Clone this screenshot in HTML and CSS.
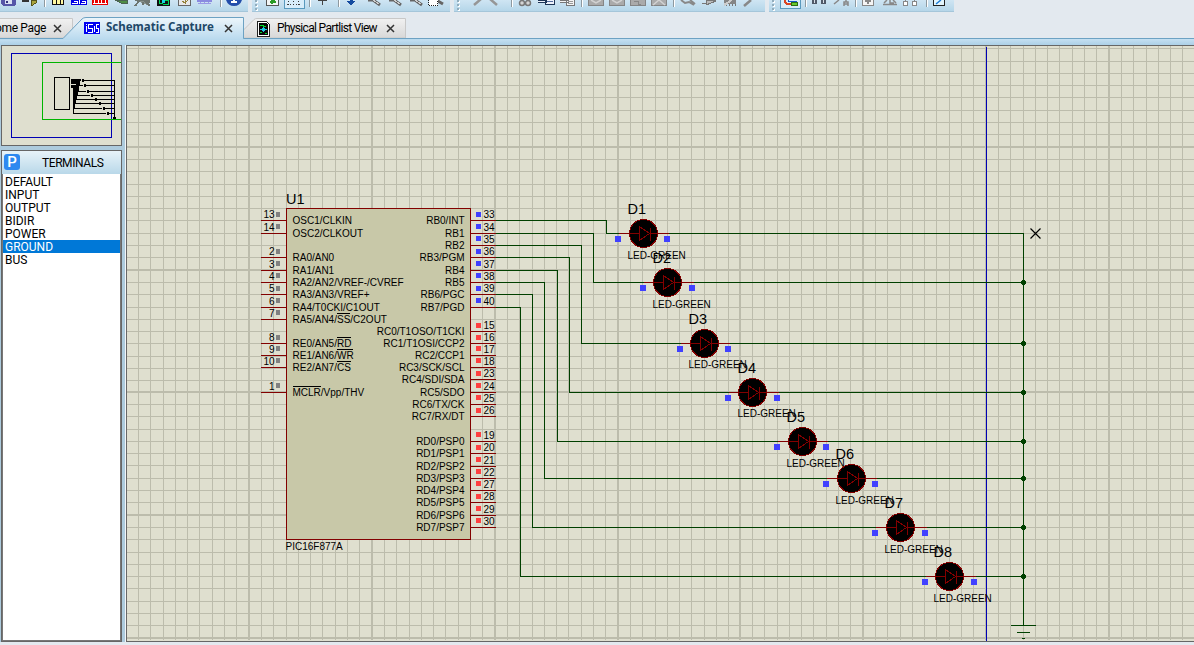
FILE: index.html
```html
<!DOCTYPE html>
<html lang="en">
<head>
<meta charset="utf-8">
<title>Schematic Capture</title>
<link rel="stylesheet" href="styles.css">
</head>
<body>
<div class="app">
  <header class="toolbar">
    <div class="group group-file">
      <svg width="247" height="12" shape-rendering="crispEdges">
        <path d="M1 0H16V4L14 6H3L1 4Z" fill="#5656a8"/><path d="M5 0H12V4H5Z" fill="#d9dff2"/><path d="M6 1H8V3H6Z" fill="#34347c"/>
        <path d="M22 0H29V2H22Z" fill="#333"/><path d="M31 0H36V3L31 6Z" fill="#aaa43c" stroke="#55551c"/>
        <path d="M44 0V7" stroke="#8e999f"/><path d="M45 0V7" stroke="#fff"/>
        <path d="M52 0H64V5H52Z" fill="#111"/><path d="M53 0H56V4H53ZM57 0H60V4H57ZM61 0H63V4H61Z" fill="#fff8a0"/>
        <path d="M71 0H87V5H71Z" fill="#0000e6"/><path d="M72 3.500H77.500V1.500H74M79.500 0V4M81 3.500H85.500V1.500H82" stroke="#fff" fill="none"/>
        <path d="M92 0H108V5H92Z" fill="#e80000"/><path d="M93 3.500H107M94.500 0V3M98.500 0V3M101.500 0V3M105.500 0V3" stroke="#fff" fill="none"/>
        <path d="M115 0L121 3H127V0Z" fill="#4e8e45" stroke="#4b6352"/>
        <path d="M135 0H149V2H146L150 6M139 1L135 6M143 2V5" fill="#87928c" stroke="#6c7570" stroke-width="2"/>
        <path d="M157 0H170V6H157Z" fill="#111"/><path d="M159 0V3H163M165 0H168V4H163" fill="none" stroke="#00d85c"/><path d="M162 0H165V3H162Z" fill="#16d6df"/>
        <path d="M178.500-1H190.500V5.500H178.500Z" fill="#e8e8e8" stroke="#666"/><path d="M182 1L185 3L188 0M185 0V4" stroke="#958138" fill="none"/>
        <path d="M197 0H212V2H197Z" fill="#8a8ae0"/><path d="M198 3.500H211M200 2V3M204 2V3M208 2V3" stroke="#9999e5"/>
        <path d="M220 0V7" stroke="#8e999f"/><path d="M221 0V7" stroke="#fff"/>
        <path d="M226 0H242Q240 6 234 6Q228 6 226 0" fill="#234daa" shape-rendering="auto"/><path d="M231 1H237V3H231ZM233 0H235V1H233Z" fill="#fff"/>
      </svg>
    </div>
    <div class="group group-view">
      <svg width="198" height="12" shape-rendering="crispEdges">
        <path d="M4 1H6V3H4ZM4 5H6V7H4ZM4 9H6V11H4Z" fill="#fff"/><path d="M3 0H5V2H3ZM3 4H5V6H3ZM3 8H5V10H3Z" fill="#92adbd"/>
        <path d="M14.500-1H26.500V5.500H14.500Z" fill="#f2f5f5" stroke="#555"/><path d="M20 4V0L24 2H18" fill="none" stroke="#2a9b25" stroke-width="2"/>
        <path d="M32.500-1H52.500V8.500H32.500Z" fill="#d8edfa" stroke="#5999bd"/><path d="M35 4.500H50" stroke="#444" stroke-dasharray="1 2"/><path d="M36 1V6M41 1V6M46 1V6" stroke="#333" stroke-dasharray="1 2"/>
        <path d="M57 0V7" stroke="#8e999f"/><path d="M58 0V7" stroke="#fff"/><path d="M70.500 0V5M66 .500H75" stroke="#444"/>
        <path d="M86 0V7" stroke="#8e999f"/><path d="M87 0V7" stroke="#fff"/>
        <path d="M95 1L99 5L103 1H100V0H98V1Z" fill="#144b9f" stroke="#144b9f"/>
        <g fill="none" stroke="#666" stroke-width="3" shape-rendering="auto"><path d="M116 0H121L128 5M137 0H142L149 5M158 0H163L170 5M184 0L191 4"/></g>
        <g fill="none" stroke="#ccc"><path d="M121 0L127 4M142 0L148 4M163 0L169 4"/></g>
        <path d="M176.500-2H185.500V5.500H176.500Z" fill="#fff" stroke="#222" stroke-dasharray="1 1"/>
      </svg>
    </div>
    <div class="group group-edit">
      <svg width="311" height="12" shape-rendering="crispEdges">
        <path d="M4 1H6V3H4ZM4 5H6V7H4ZM4 9H6V11H4Z" fill="#fff"/><path d="M3 0H5V2H3ZM3 4H5V6H3ZM3 8H5V10H3Z" fill="#92adbd"/>
        <path d="M20 5L27-1M43 5L36-1" stroke="#969696" stroke-width="2.500" shape-rendering="auto"/>
        <path d="M57 0V7" stroke="#8e999f"/><path d="M58 0V7" stroke="#fff"/>
        <g fill="#d4d4d4" stroke="#777" stroke-width="1.500" shape-rendering="auto"><circle cx="68" cy="3" r="2.500"/><circle cx="74" cy="3" r="2.500"/></g>
        <path d="M84 0H92V2H84M91.500-1H100.500V4H91.500Z" fill="#ecf1fa" stroke="#1d3556"/><path d="M93 1.500H99" stroke="#536c9d"/>
        <path d="M106 0H114V2H106M112.500-1H120.500V5.500H112.500Z" fill="#f3f3f3" stroke="#777"/><path d="M114 1.500H119M114 3.500H119" stroke="#999"/>
        <path d="M127 0V7" stroke="#8e999f"/><path d="M128 0V7" stroke="#fff"/>
        <path d="M134.500-1H149.500V5.500H134.500ZM155.500-1H170.500V5.500H155.500ZM176.500-1H191.500V5.500H176.500ZM197.500-1H212.500V5.500H197.500Z" fill="#aaa" stroke="#858585"/>
        <path d="M137 0L142 3L147 0M158 0L163 3L168 0M199 5L205 0L211 5" fill="none" stroke="#d2d2d2" stroke-width="1.500" shape-rendering="auto"/><path d="M180 1H184V4H187" fill="none" stroke="#888"/>
        <path d="M219 0V7" stroke="#8e999f"/><path d="M220 0V7" stroke="#fff"/>
        <path d="M227 0L231 3L235 2L240 5M236 0L241 4" fill="none" stroke="#888" stroke-width="2" shape-rendering="auto"/>
        <path d="M248 3H252V0L262 1L252 5V3" fill="#bbb" stroke="#777"/>
        <path d="M270 0H282V4H270Z" fill="#858585"/><path d="M272 4V6M275 4V6M278 4V6M281 4V6" stroke="#777"/><path d="M270 5L278 0" stroke="#ccc" stroke-width="2"/>
        <path d="M290 6L297 0" stroke="#888" stroke-width="2.500" shape-rendering="auto"/>
      </svg>
    </div>
    <div class="group group-design">
      <svg width="185" height="12" shape-rendering="crispEdges">
        <path d="M4 1H6V3H4ZM4 5H6V7H4ZM4 9H6V11H4Z" fill="#fff"/><path d="M3 0H5V2H3ZM3 4H5V6H3ZM3 8H5V10H3Z" fill="#92adbd"/>
        <path d="M11.500-1H31.500V8.500H11.500Z" fill="#d8edfa" stroke="#5999bd"/><path d="M16 0V2L18 4H22" fill="none" stroke="#d94524" stroke-width="2"/><path d="M19.500 0V1.500H28" fill="none" stroke="#1556c6"/><path d="M22.500 2.500H28.500V5.500H22.500Z" fill="#68c92f" stroke="#2d6e13"/>
        <path d="M36 0V7" stroke="#8e999f"/><path d="M37 0V7" stroke="#fff"/>
        <path d="M43 0H48V4H43ZM52 0H57V4H52Z" fill="#4f5968"/><path d="M45 0H46V3H45ZM54 0H55V3H54Z" fill="#d9dfe7"/>
        <path d="M65 4L70 0M75 6V2H79V6M75 4H79M77 0V2" fill="none" stroke="#888" stroke-width="1.500" shape-rendering="auto"/>
        <path d="M86 0V7" stroke="#8e999f"/><path d="M87 0V7" stroke="#fff"/>
        <path d="M93.500-1H104.500V5.500H93.500Z" fill="#f5f5f5" stroke="#888"/><path d="M96 1H102M99 0V4" stroke="#888" stroke-width="2"/>
        <path d="M114 4.500H128M115 3L118 0M121 0V3H125M124 0L127 3" fill="none" stroke="#888" stroke-width="1.500" shape-rendering="auto"/>
        <path d="M134.500 1.500H138.500V5.500H134.500ZM143.500 1.500H147.500V5.500H143.500ZM136 0V1M145 0V1" fill="#fff" stroke="#888"/>
        <path d="M157 0V7" stroke="#8e999f"/><path d="M158 0V7" stroke="#fff"/>
        <path d="M164.500-1H175.500V5.500H164.500Z" fill="#e3f5fc" stroke="#222"/><path d="M167 4L172 0" stroke="#1c7cd6" stroke-width="1.500" shape-rendering="auto"/>
      </svg>
    </div>
  </header>

  <nav class="tabs">
    <svg class="tab-shapes" width="420" height="23">
      <defs><linearGradient id="tabGray" x2="0" y2="1"><stop stop-color="#f1f1f1"/><stop offset="1" stop-color="#d8d8d8"/></linearGradient>
      <linearGradient id="tabBlue" x2="0" y2="1"><stop stop-color="#edf6fb"/><stop offset="1" stop-color="#b8d9ee"/></linearGradient></defs>
      <path d="M-1 1.500H72.500V21H-1Z" fill="url(#tabGray)" stroke="#c8c8c8"/>
      <path d="M243.500 21V13L254 2.500Q255 1.500 257 1.500H405.500V21Z" fill="url(#tabGray)" stroke="#c8c8c8"/>
      <path d="M0 21.500H63L82 2Q83.500 .500 86 .500H243.500V21.500H420V23H0Z" fill="url(#tabBlue)"/>
      <path d="M0 21.500H63L82 2Q83.500 .500 86 .500H243.500V21.500H420" fill="none" stroke="#6da2c3"/>
    </svg>
    <div class="tab tab-home"><span class="tab-label">ome Page</span><svg class="close" width="9" height="9"><path d="M1 1L8 8M8 1L1 8"/></svg></div>
    <div class="tab tab-schematic">
      <svg class="tab-icon" width="16" height="12" shape-rendering="crispEdges"><path d="M0 0H16V12H0Z" fill="#0000f0"/><path d="M2.500 2V3M2.500 4V10M9 2.500H4.500V6.500H8.500V10.500H4M10.500 4V10M15 2.500H12.500V6.500H14.500V10.500H12" fill="none" stroke="#fff"/></svg>
      <span class="tab-label">Schematic Capture</span><svg class="close" width="9" height="9"><path d="M1 1L8 8M8 1L1 8"/></svg></div>
    <div class="tab tab-parts">
      <svg class="tab-icon" width="13" height="16" shape-rendering="crispEdges"><path d="M.500 .500H9.500L12.500 3.500V15.500H.500Z" fill="#fff" stroke="#222"/><path d="M2 2H9L11 4V14H2Z" fill="#080808"/><path d="M3 4.500H6V7M3 11.500H5M8 12.500H10M7 5.500H9" fill="none" stroke="#00dc29"/><path d="M5 7H8V10H5ZM3 8H10V9H3ZM6 6H7V11H6Z" fill="#19c7e5"/></svg>
      <span class="tab-label">Physical Partlist View</span><svg class="close" width="9" height="9"><path d="M1 1L8 8M8 1L1 8"/></svg></div>
  </nav>

  <main class="workspace">
    <aside class="sidebar">
      <div class="overview">
        <svg width="119" height="99" viewBox="2 46 119 99" shape-rendering="crispEdges">
          <rect x="11.500" y="53.500" width="100" height="84" fill="none" stroke="#0000b4"/>
          <path d="M121 62.500H42.500V119.500H121" fill="none" stroke="#00b400"/>
          <rect x="54.500" y="77.500" width="15" height="32" fill="none" stroke="#000"/>
          <path d="M71 79H81V81H80V85H79V91H78V95H77V99H76V104H75V108H74V114H73V88H71V85H76V84H71Z" fill="#000"/>
          <path d="M84 80.500H114.500V118M79 85.500H114M78 91.500H114M77 95.500H114M76 99.500H114M75 103.500H114M74 108.500H114M73 113.500H114" fill="none" stroke="#000"/>
          <path d="M82 79H84V82H82ZM84 84H86V87H84ZM87 90H89V93H87ZM91 94H93V97H91ZM95 98H97V101H95ZM99 102H101V105H99ZM103 107H105V110H103ZM107 112H109V115H107ZM113 117H116V119H113Z"/>
          <path d="M83.500 85V86M86.500 91V92M90.500 95V96M102.500 108V109M106.500 113V114" stroke="#dfdfcf"/>
        </svg>
      </div>
      <div class="picker">
        <div class="picker-head"><span class="p-button">P</span><span class="picker-title">TERMINALS</span></div>
        <ul class="terminals">
          <li>DEFAULT</li><li>INPUT</li><li>OUTPUT</li><li>BIDIR</li><li>POWER</li><li class="selected">GROUND</li><li>BUS</li>
        </ul>
      </div>
    </aside>
    <div class="splitter"></div>
    <section class="canvas"><svg id="sheet" width="1067" height="595" viewBox="127 46 1067 595"></svg></section>
  </main>
</div>
<script src="schematic.js"></script>
</body>
</html>
```
FILE: styles.css
```css
* { box-sizing: border-box; }
body { margin: 0; overflow: hidden; background: #e3e9ef; font-family: Roboto, "Liberation Sans", sans-serif; color: #000; }
svg { display: block; flex: none; }
.app { display: flex; flex-direction: column; width: 1194px; height: 645px; }

.toolbar { display: flex; height: 12px; flex: none; }
.group { height: 12px; overflow: hidden; background: linear-gradient(#cfe5f3, #b5d6e9); border-bottom: 1px solid #a5c6da; }
.group-file { width: 248px; }
.group-view { width: 198px; margin-left: 4px; }
.group-edit { width: 311px; margin-left: 4px; }
.group-design { width: 185px; margin-left: 4px; }

.tabs { position: relative; display: flex; align-items: center; height: 33px; flex: none; background: linear-gradient(#e3e9ef 26px, #6da2c3 26px, #6da2c3 27px, #c5e0f2 27px, #acd0e7 33px); }
.tab-shapes { position: absolute; left: 0; top: 5px; }
.tab { position: relative; display: flex; align-items: center; height: 22px; white-space: nowrap; font-size: 12px; }
.tab-label { line-height: 14px; margin-top: -1px; }
.tab-home { width: 84px; }
.tab-home .tab-label { width: 53px; text-indent: -5px; letter-spacing: -.35px; }
.tab-schematic { width: 173px; gap: 6px; }
.tab-schematic .tab-icon { margin-top: -2px; }
.tab-schematic .tab-label { width: 112px; margin-top: -4px; font-family: "Noto Sans", sans-serif; font-size: 11.500px; font-weight: 700; color: #1e4767; letter-spacing: 0; }
.tab-parts { gap: 7px; }
.tab-parts .tab-label { width: 101px; letter-spacing: -.68px; }
.tab-parts .close { margin-left: 1px; }
.close path { fill: none; stroke: #333; stroke-width: 1.500; }

.workspace { display: flex; height: 597px; flex: none; }
.sidebar { width: 122px; padding-left: 1px; background: #adcbdd; display: flex; flex-direction: column; gap: 4px; }
.overview { height: 101px; flex: none; border: 1px solid #666; background: #dfdfcf; }
.picker { flex: 1; border: 1px solid #666; display: flex; flex-direction: column; background: #fff; }
.picker-head { height: 23px; flex: none; display: flex; align-items: center; padding-left: 2px; background: linear-gradient(#e7f3f9, #b9d8e9); }
.p-button { width: 16px; height: 16px; margin-top: -1px; border-radius: 3px; background: #2d89f0; color: #fff; text-align: center; font-size: 15px; font-weight: 500; line-height: 16px; }
.picker-title { margin-left: 22px; font-size: 12px; letter-spacing: -.42px; }
.terminals { flex: 1; margin: 0; padding: 1px 0 0; list-style: none; border: solid #777; border-width: 0 1px 1px; }
.terminals li { height: 13px; line-height: 14px; padding-left: 2px; font-size: 12px; letter-spacing: 0; }
.terminals .selected { background: #0078d7; color: #fff; }
.splitter { width: 4px; background: linear-gradient(90deg, #adcbdd 3px, #f2f6f8 3px); }
.canvas { flex: 1; border: 1px solid #666; border-right: 0; background: #dfdfcf; overflow: hidden; }

#sheet { font-family: "Liberation Sans", Arial, sans-serif; font-size: 10px; }
#sheet path, #sheet rect, #sheet circle { shape-rendering: crispEdges; }
.grid { fill: #bcbcac; }
.edge { stroke: #0000b4; fill: none; }
.wire { stroke: #004000; fill: none; }
.dot { fill: #004000; }
.lead { stroke: #820000; fill: none; }
.chip { fill: #c8c8a8; stroke: #820000; }
.lamp { fill: #000; stroke: #820000; }
.bar { stroke: #000; fill: none; }
.ref { font-size: 14.500px; }
.end { text-anchor: end; }
.idle { fill: #808080; }
.low { fill: #4040ff; }
.high { fill: #ff4040; }
#sheet .cursor { stroke: #000; fill: none; stroke-width: 1.200; shape-rendering: auto; }
```
FILE: schematic.js
```js
const out = [];
const rect = (c, x, y, w, h) => out.push(`<rect class="${c}" x="${x}" y="${y}" width="${w}" height="${h}"/>`);
const path = (c, d) => out.push(`<path class="${c}" transform="translate(.5 .5)" d="${d}"/>`);
const text = (c, x, y, s) => out.push(`<text class="${c}" x="${x}" y="${y}">${s}</text>`);

// Grid: nine minor lines between each pair of major lines
const minor = [12, 24, 37, 49, 61, 73, 86, 98, 110];
for (const x of [126, 249, 372, 495, 618, 740, 863, 986, 1109]) {
  rect('grid', x - 1, 46, 2, 594);
  minor.forEach(d => rect('grid', x + d, 46, 1, 594));
}
for (const y of [24, 147, 270, 392, 515, 638]) {
  rect('grid', 127, y - 1, 1067, 2);
  minor.forEach(d => { if (y + d < 640) rect('grid', 127, y + d, 1067, 1); });
}
path('edge', 'M986 46V640');

// Microcontroller: [pin, label, line y, state marker y]
rect('chip', 286.5, 208.5, 184, 331);
text('ref', 286, 204, 'U1');
text('', 285.5, 550, 'PIC16F877A');
const left = [
  [13, 'OSC1/CLKIN', 220, 214], [14, 'OSC2/CLKOUT', 233, 226], [2, 'RA0/AN0', 257, 251],
  [3, 'RA1/AN1', 270, 263], [4, 'RA2/AN2/VREF-/CVREF', 282, 275], [5, 'RA3/AN3/VREF+', 294, 288],
  [6, 'RA4/T0CKI/C1OUT', 307, 300], [7, 'RA5/AN4/SS/C2OUT', 319, 312], [8, 'RE0/AN5/RD', 343, 337],
  [9, 'RE1/AN6/WR', 355, 348], [10, 'RE2/AN7/CS', 367, 360], [1, 'MCLR/Vpp/THV', 392, 385]
];
for (const [n, label, y, m] of left) {
  path('lead', `M260.500 ${y}H286`);
  rect('idle', 276, m - 2, 4, 5);
  text('end', 274.5, m === y - 7 ? m + 5 : m + 4, n);
  text('', 292.5, y + 4, label);
}
path('bar', 'M336.500 313H349M336.500 337H350M336.500 349H352M336.500 361H350M292 386H320');

const right = [
  [33, 'RB0/INT', 220, 214], [34, 'RB1', 233, 226], [35, 'RB2', 245, 238], [36, 'RB3/PGM', 257, 251],
  [37, 'RB4', 270, 263], [38, 'RB5', 282, 275], [39, 'RB6/PGC', 294, 288], [40, 'RB7/PGD', 307, 300],
  [15, 'RC0/T1OSO/T1CKI', 331, 325], [16, 'RC1/T1OSI/CCP2', 343, 337], [17, 'RC2/CCP1', 355, 348],
  [18, 'RC3/SCK/SCL', 367, 360], [23, 'RC4/SDI/SDA', 379, 373], [24, 'RC5/SDO', 392, 385],
  [25, 'RC6/TX/CK', 404, 397], [26, 'RC7/RX/DT', 416, 410], [19, 'RD0/PSP0', 441, 434],
  [20, 'RD1/PSP1', 453, 447], [21, 'RD2/PSP2', 466, 459], [22, 'RD3/PSP3', 478, 471],
  [27, 'RD4/PSP4', 490, 483], [28, 'RD5/PSP5', 502, 496], [29, 'RD6/PSP6', 515, 508], [30, 'RD7/PSP7', 527, 520]
];
for (const [n, label, y, m] of right) {
  path('lead', `M470.500 ${y}H495`);
  rect(n >= 33 ? 'low' : 'high', 476, m - 2, 5, 5);
  text('', 483.5, m === y - 7 ? m + 5 : m + 4, n);
  text('end', 464.5, y + 4, label);
}

// LEDs: [x, y, source pin y, routing column, caption baseline, caption x, left marker x, right marker x]
const leds = [
  [643, 233, 220, 606, 259, 627.5, 615, 664], [667, 282, 233, 593, 308, 652.5, 640, 689],
  [704, 343, 245, 581, 368, 688.5, 677, 725], [752, 392, 257, 569, 417, 737.5, 725, 774],
  [802, 441, 270, 557, 467, 786.5, 774, 823], [851, 478, 282, 544, 504, 835.5, 823, 872],
  [900, 527, 294, 532, 553, 884.5, 872, 922], [949, 576, 307, 520, 602, 933.5, 922, 971]
];
leds.forEach(([x, y, sy, col, cap, tx, ml, mr], i) => {
  path('wire', `M495 ${sy}H${col}V${y}H${ml + 3}M${mr + 3} ${y}H1023`);
  path('lead', `M${ml + 3} ${y}H${mr + 4}`);
  out.push(`<circle class="lamp" cx="${x + .5}" cy="${y + .5}" r="14"/>`);
  path('lead', `M${x - 14} ${y}H${x - 4}M${x + 6} ${y}H${x + 14}M${x - 4} ${y - 7}V${y + 7}L${x + 6} ${y}ZM${x + 6.5} ${y - 6}V${y + 7}`);
  rect('low', ml, y + 3, 6, 6);
  rect('low', mr, y + 3, 6, 6);
  text('ref', tx, y - 19, 'D' + (i + 1));
  text('', tx, cap, 'LED-GREEN');
  if (i) out.push(`<circle class="dot" cx="1023.5" cy="${y + .5}" r="2.5"/>`);
});

// Common rail and ground symbol
path('wire', 'M1023 233V625M1010.500 625H1035.500M1016.500 632H1029.500M1021.500 638H1024.500');
path('cursor', 'M1030 228L1040 238M1040 228L1030 238');
document.getElementById('sheet').innerHTML = out.join('');
```
